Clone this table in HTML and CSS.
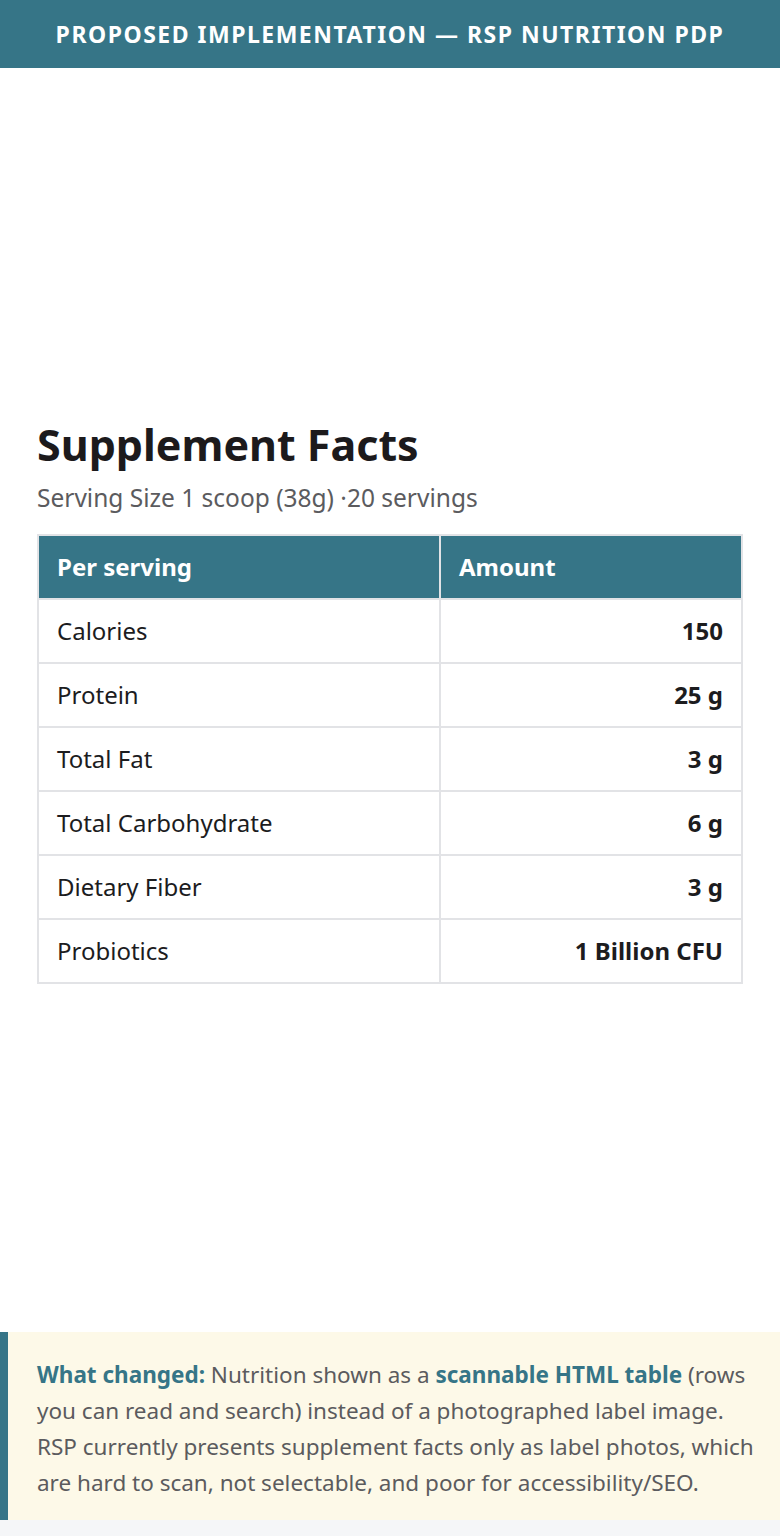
FILE: index.html
```html
<!DOCTYPE html>
<html lang="en">
<head>
<meta charset="utf-8">
<title>RSP Nutrition PDP</title>
<link rel="stylesheet" href="styles.css">
</head>
<body>
<header class="topbar">Proposed implementation — RSP Nutrition PDP</header>
<main class="main">
  <section class="facts">
    <h1 class="facts-title">Supplement Facts</h1>
    <p class="facts-sub">Serving Size 1 scoop (38g) ·20 servings</p>
    <table class="facts-table">
      <thead>
        <tr><th>Per serving</th><th>Amount</th></tr>
      </thead>
      <tbody>
        <tr><td>Calories</td><td class="amt">150</td></tr>
        <tr><td>Protein</td><td class="amt">25 g</td></tr>
        <tr><td>Total Fat</td><td class="amt">3 g</td></tr>
        <tr><td>Total Carbohydrate</td><td class="amt">6 g</td></tr>
        <tr><td>Dietary Fiber</td><td class="amt">3 g</td></tr>
        <tr><td>Probiotics</td><td class="amt">1 Billion CFU</td></tr>
      </tbody>
    </table>
  </section>
</main>
<aside class="note">
  <p><strong>What changed:</strong> Nutrition shown as a <strong>scannable HTML table</strong> (rows you can read and search) instead of a photographed label image. RSP currently presents supplement facts only as label photos, which are hard to scan, not selectable, and poor for accessibility/SEO.</p>
</aside>
</body>
</html>
```
FILE: styles.css
```css
* { box-sizing: border-box; }
html, body { margin: 0; padding: 0; }
body {
  background: #f5f6f8;
  font-family: "Noto Sans", "Open Sans", sans-serif;
  color: #1c1c1e;
  padding-bottom: 16px;
}
.topbar {
  background: #367587;
  color: #fff;
  height: 68px;
  display: flex;
  align-items: center;
  justify-content: center;
  font-weight: 700;
  font-size: 23px;
  letter-spacing: 1.5px;
  text-transform: uppercase;
  padding-bottom: 1px;
}
.main {
  background: #fff;
  min-height: 1264px;
  display: flex;
  flex-direction: column;
  justify-content: center;
  padding: 0 37px;
}
.facts-title {
  margin: 0;
  font-size: 43px;
  font-weight: 700;
  line-height: 56px;
  color: #1c1a1c;
}
.facts-sub {
  margin: 5px 0 16px;
  font-size: 24.5px;
  line-height: 40px;
  color: #5b5b5e;
}
.facts-table {
  width: 100%;
  border-collapse: collapse;
  font-size: 24px;
}
.facts-table th, .facts-table td {
  border: 2px solid #e2e3e6;
  height: 64px;
  padding: 0 18px;
  text-align: left;
}
.facts-table th {
  background: #367587;
  color: #fff;
  font-weight: 700;
}
.facts-table th:first-child, .facts-table td:first-child { width: 402px; }
.facts-table td.amt {
  text-align: right;
  font-weight: 700;
}
.note {
  background: #fdf9e8;
  border-left: 8px solid #367587;
  padding: 25px 24px 19px 29px;
}
.note p {
  margin: 0;
  font-size: 22.5px;
  line-height: 36px;
  color: #5b5b5e;
}
.note strong { color: #367587; font-weight: 700; }
```
